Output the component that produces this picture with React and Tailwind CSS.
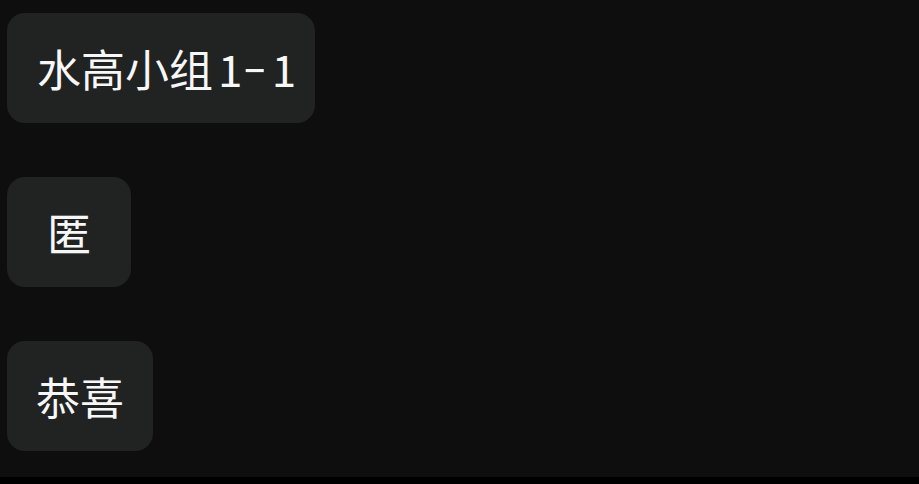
export default function App() {
  return (
    <div className="flex h-[484px] w-full flex-col bg-[#0e0e0e]" style={{ fontFamily: '"Noto Sans CJK SC", "Noto Sans", sans-serif' }}>
      <div className="flex flex-1 flex-col items-start gap-[54px] pl-[7px] pt-[13px]">
        <div className="flex h-[110px] w-[308px] items-center rounded-[18px] bg-[#212222] pl-[30px] text-[44px] leading-none text-[#f7f7f7]">
          水高小组
          <span className="ml-[5px]">1</span>
          <span className="mx-[5px] inline-block -translate-y-[4px] scale-x-[1.6]">-</span>
          <span className="ml-[4px]">1</span>
        </div>
        <div className="flex h-[110px] w-[124px] items-center justify-center rounded-[18px] bg-[#212222] text-[44px] leading-none text-[#f7f7f7]">
          匿
        </div>
        <div className="flex h-[110px] w-[146px] items-center justify-center rounded-[18px] bg-[#212222] text-[44px] leading-none text-[#f7f7f7]">
          恭喜
        </div>
      </div>
      <div className="h-[7px] bg-black" />
    </div>
  )
}
